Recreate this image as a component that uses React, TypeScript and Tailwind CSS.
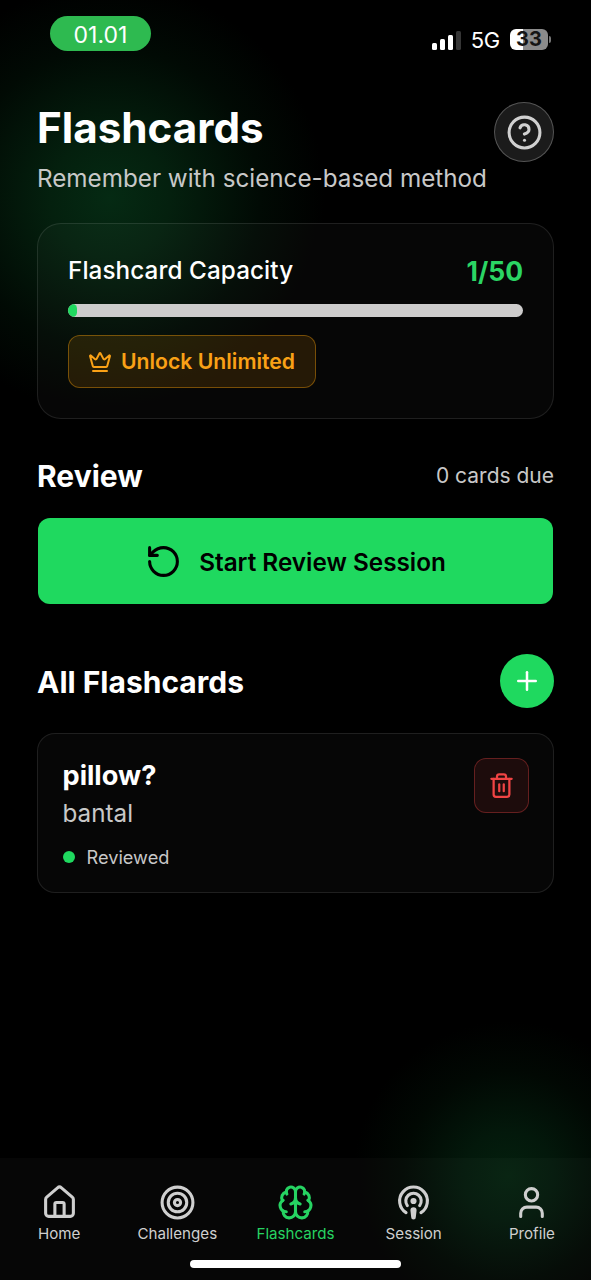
import {
  Brain,
  CircleHelp,
  Crown,
  House,
  Plus,
  Podcast,
  RotateCcw,
  Target,
  Trash2,
  User,
} from "lucide-react";

const navItems = [
  { name: "Home", icon: House },
  { name: "Challenges", icon: Target },
  { name: "Flashcards", icon: Brain, active: true },
  { name: "Session", icon: Podcast },
  { name: "Profile", icon: User },
];

const cards = [{ front: "pillow?", back: "bantal", status: "Reviewed" }];

const used = 1;
const limit = 50;

function StatusBar() {
  return (
    <div className="flex h-[64px] items-start justify-between pt-4 pr-[40px] pl-[50px]">
      <div className="flex h-[35px] w-[101px] items-center justify-center rounded-full bg-[#2eba50] pt-[3px] text-[23px]">
        01.01
      </div>
      <div className="mt-[13px] flex items-center">
        <div className="flex h-[20px] items-end gap-[3px]">
          <span className="h-[7px] w-[5px] rounded-[1.5px] bg-white" />
          <span className="h-[11px] w-[5px] rounded-[1.5px] bg-white" />
          <span className="h-[15px] w-[5px] rounded-[1.5px] bg-white" />
          <span className="h-[19px] w-[5px] rounded-[1.5px] bg-[#363636]" />
        </div>
        <span className="ml-[10px] text-[22px] leading-[22px] tracking-[-0.3px]">
          5G
        </span>
        <div className="-mt-[2px] ml-[10px] flex h-[21px] w-[38px] items-center justify-center rounded-[6px] bg-[linear-gradient(90deg,#fff_33%,#8b8b8b_33%)] text-[20px] leading-none font-bold text-[#151515]">
          33
        </div>
        <span className="-mt-[2px] ml-[1px] h-[7px] w-[2px] rounded-r-full bg-[#777]" />
      </div>
    </div>
  );
}

function CapacityCard() {
  return (
    <section className="mt-[29px] h-[196px] rounded-[24px] border border-white/10 bg-white/[0.024] px-[30px] pt-[29px]">
      <div className="flex h-[36px] items-center justify-between">
        <h2 className="text-[24.24px] font-medium tracking-[0.1px]">
          Flashcard Capacity
        </h2>
        <span className="text-[26.5px] leading-[36px] font-bold text-[#2bd564]">
          {used}/{limit}
        </span>
      </div>
      <div className="mt-[15px] h-[13px] overflow-hidden rounded-full bg-[#cdcccc]">
        <div
          className="h-full rounded-full bg-[#1fd95f]"
          style={{ width: `${(used / limit) * 100}%` }}
        />
      </div>
      <button className="mt-[18px] flex h-[53px] w-[248px] items-center rounded-[12px] border border-[#f59e0b]/40 bg-[#f59e0b]/13 pl-[19px] text-[#f9a116]">
        <Crown size={24} />
        <span className="ml-[9px] text-[21.2px] font-semibold">
          Unlock Unlimited
        </span>
      </button>
    </section>
  );
}

function BottomNav() {
  return (
    <nav className="mt-auto flex h-[122px] flex-col items-center bg-white/[0.024]">
      <div className="flex w-full pt-[26px]">
        {navItems.map((item) => (
          <div
            key={item.name}
            className={`flex flex-1 flex-col items-center ${
              item.active ? "text-[#26d362]" : "text-[#cfcfcf]"
            }`}
          >
            <item.icon size={37} />
            <span className="mt-[3px] text-[15.15px] leading-[20px]">
              {item.name}
            </span>
          </div>
        ))}
      </div>
      <div className="mt-[16px] h-[8px] w-[211px] rounded-full bg-white" />
    </nav>
  );
}

export default function App() {
  return (
    <div className="flex h-[1280px] w-[591px] flex-col overflow-hidden bg-black bg-[radial-gradient(circle_at_110px_198px,#052a13_0,#04200e_60px,#010a04_150px,transparent_215px),radial-gradient(circle_at_508px_1176px,#04200e_0,#03180b_45px,#010803_105px,transparent_155px)] font-[Inter,sans-serif] text-white">
      <StatusBar />
      <main className="px-[37px] pt-[38px]">
        <header className="flex h-[92px] justify-between">
          <div className="whitespace-nowrap">
            <h1 className="text-[42.2px] leading-[52px] font-bold">
              Flashcards
            </h1>
            <p className="mt-[8px] text-[24.24px] leading-[34px] text-[#c8c8c8]">
              Remember with science-based method
            </p>
          </div>
          <button className="-ml-20 flex size-[60px] items-center justify-center rounded-full border border-white/25 bg-[#1b1b1b] text-[#d0d0d0]">
            <CircleHelp size={37} />
          </button>
        </header>

        <CapacityCard />

        <div className="mt-[34px] flex h-[44px] items-center justify-between">
          <h2 className="pt-[2px] text-[30px] leading-[44px] font-bold">
            Review
          </h2>
          <span className="pt-px text-[21px] text-[#c8c8c8]">0 cards due</span>
        </div>
        <button className="mt-[21px] ml-px flex h-[86px] w-[515px] items-center justify-center gap-[17px] rounded-[12px] bg-[#1fd95f] text-[24.3px] font-semibold text-black">
          <RotateCcw size={37} />
          <span className="pt-[2px]">Start Review Session</span>
        </button>

        <div className="mt-[50px] flex h-[54px] items-center justify-between">
          <h2 className="pt-px text-[30px] leading-[44px] font-bold">
            All Flashcards
          </h2>
          <button className="flex size-[54px] items-center justify-center rounded-full bg-[#1fd95f]">
            <Plus size={30} />
          </button>
        </div>

        {cards.map((card) => (
          <article
            key={card.front}
            className="mt-[25px] flex h-[160px] justify-between rounded-[18px] border border-white/10 bg-white/[0.024] px-[24.5px] pt-[24px]"
          >
            <div>
              <h3 className="text-[27.2px] leading-[36px] font-bold">
                {card.front}
              </h3>
              <p className="mt-[2px] text-[24.24px] leading-[36px] text-[#c8c8c8]">
                {card.back}
              </p>
              <div className="mt-[12px] flex items-center gap-[12px] text-[18.2px] leading-[26px] text-[#c8c8c8]">
                <span className="size-[12px] rounded-full bg-[#1fd95f]" />
                {card.status}
              </div>
            </div>
            <button className="flex size-[55px] items-center justify-center rounded-[12px] border border-[#ef4444]/35 bg-[#ef4444]/10 text-[#ef4444]">
              <Trash2 size={27} />
            </button>
          </article>
        ))}
      </main>
      <BottomNav />
    </div>
  );
}
